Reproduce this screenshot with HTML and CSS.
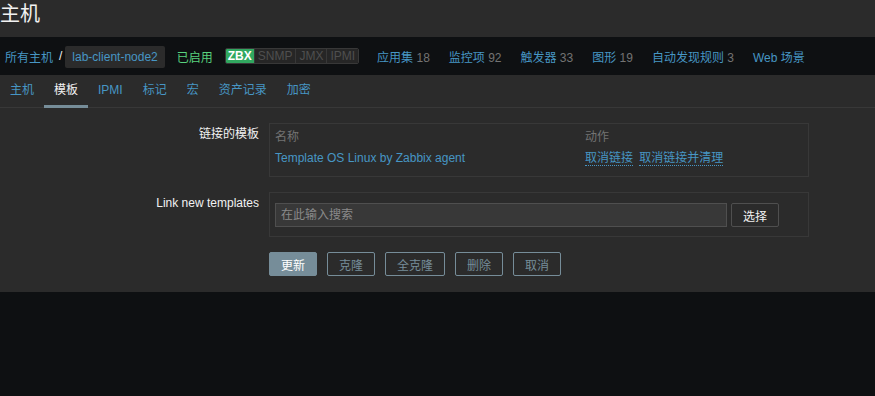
FILE: index.html
```html
<!DOCTYPE html>
<html lang="zh-CN">
<head>
<meta charset="UTF-8" />
<meta name="viewport" content="width=device-width, initial-scale=1" />
<title>主机 - 模板</title>
<link rel="stylesheet" href="styles.css">
</head>
<body>

<!-- TITLE -->
<header class="page-header">
  <h1>主机</h1>
</header>

<!-- HOST NAV -->
<nav class="host-nav">
  <a class="crumb" href="#">所有主机</a>
  <span class="crumb-sep">/</span>
  <a class="crumb-host" href="#">lab-client-node2</a>
  <span class="status-on">已启用</span>
  <div class="avail">
    <span class="avail-on">ZBX</span>
    <span>SNMP</span>
    <span>JMX</span>
    <span>IPMI</span>
  </div>
  <div class="nav-links">
    <a href="#">应用集 <em>18</em></a>
    <a href="#">监控项 <em>92</em></a>
    <a href="#">触发器 <em>33</em></a>
    <a href="#">图形 <em>19</em></a>
    <a href="#">自动发现规则 <em>3</em></a>
    <a href="#">Web 场景</a>
  </div>
</nav>

<!-- FORM -->
<main class="form-wrap">
  <ul class="tabs">
    <li><a href="#">主机</a></li>
    <li class="active"><a href="#">模板</a></li>
    <li><a href="#">IPMI</a></li>
    <li><a href="#">标记</a></li>
    <li><a href="#">宏</a></li>
    <li><a href="#">资产记录</a></li>
    <li><a href="#">加密</a></li>
  </ul>

  <div class="tab-body">
    <div class="form-row">
      <label>链接的模板</label>
      <div class="field-box">
        <table class="linked">
          <tr>
            <th class="col-name">名称</th>
            <th>动作</th>
          </tr>
          <tr>
            <td><a href="#">Template OS Linux by Zabbix agent</a></td>
            <td>
              <a class="dotted" href="#">取消链接</a>
              <a class="dotted" href="#">取消链接并清理</a>
            </td>
          </tr>
        </table>
      </div>
    </div>

    <div class="form-row">
      <label for="tplSearch">Link new templates</label>
      <div class="field-box search-box">
        <input type="text" id="tplSearch" placeholder="在此输入搜索" />
        <button type="button" class="btn-plain">选择</button>
      </div>
    </div>

    <div class="form-actions">
      <button type="button" class="btn-main">更新</button>
      <button type="button" class="btn-alt">克隆</button>
      <button type="button" class="btn-alt">全克隆</button>
      <button type="button" class="btn-alt">删除</button>
      <button type="button" class="btn-alt">取消</button>
    </div>
  </div>
</main>

</body>
</html>
```

FILE: styles.css
```css
body {
  margin: 0;
  font-family: 'Liberation Sans', Arial, 'Noto Sans CJK SC', sans-serif;
  font-size: 12px;
  background: #0e1012;
  color: #f2f2f2;
  min-height: 100vh;
}
a {
  color: #4796c4;
  text-decoration: none;
}
/* TITLE */
.page-header {
  background: #2b2b2b;
  height: 37px;
}
.page-header h1 {
  margin: 0;
  font-size: 20px;
  font-weight: normal;
  line-height: 28px;
  color: #f2f2f2;
}
/* HOST NAV */
.host-nav {
  display: flex;
  align-items: center;
  height: 38px;
  padding-left: 5px;
  background: #0e1012;
}
.crumb-sep {
  margin: 0 3px 0 6px;
  color: #f2f2f2;
}
.crumb-host {
  display: block;
  height: 22px;
  line-height: 22px;
  padding: 0 7px;
  margin-top: 2px;
  background: #2b2b2b;
  border-radius: 2px;
}
.status-on {
  margin-left: 12px;
  color: #59d27e;
}
.avail {
  display: flex;
  margin-left: 12px;
  border: 1px solid #383838;
  border-radius: 2px;
  overflow: hidden;
}
.avail span {
  padding: 0 3px;
  line-height: 14px;
  font-size: 12px;
  color: #4f4f4f;
  background: #262626;
  border-left: 1px solid #383838;
}
.avail .avail-on {
  border-left: none;
  background: #31a860;
  color: #ffffff;
  font-weight: bold;
  padding: 0 2px;
}
.nav-links {
  display: flex;
  gap: 19px;
  margin-left: 18px;
}
.nav-links em {
  font-style: normal;
  color: #737373;
}
/* TABS */
.form-wrap {
  background: #2b2b2b;
}
.tabs {
  display: flex;
  margin: 0;
  padding: 0;
  list-style: none;
  border-bottom: 1px solid #383838;
}
.tabs li {
  margin-bottom: -1px;
}
.tabs a {
  display: block;
  padding: 0 10px;
  line-height: 30px;
  border-bottom: 3px solid transparent;
}
.tabs .active a {
  color: #f2f2f2;
  border-bottom-color: #768d99;
}
/* FORM BODY */
.tab-body {
  padding: 15px 0 16px 0;
}
.form-row {
  display: grid;
  grid-template-columns: 259px 540px;
  column-gap: 10px;
  margin-bottom: 15px;
}
.form-row label {
  text-align: right;
  padding-top: 4px;
  line-height: 15px;
  color: #f2f2f2;
}
.field-box {
  border: 1px solid #383838;
  padding: 5px 5px 4px 5px;
}
.linked {
  width: 100%;
  border-collapse: collapse;
}
.linked th {
  text-align: left;
  font-weight: normal;
  color: #737373;
  line-height: 16px;
  padding: 0;
}
.linked .col-name {
  width: 310px;
}
.linked td {
  line-height: 17px;
  padding: 5px 0;
}
.dotted {
  border-bottom: 1px dotted #4796c4;
  margin-right: 3px;
}
.search-box {
  display: flex;
  gap: 4px;
  padding: 10px 5px 9px 5px;
}
.search-box input {
  width: 452px;
  height: 24px;
  box-sizing: border-box;
  padding: 0 5px;
  border: 1px solid #4f4f4f;
  background: #383838;
  color: #f2f2f2;
  font-family: inherit;
  font-size: 12px;
}
.search-box input::placeholder {
  color: #8a8a8a;
}
button {
  height: 24px;
  padding: 0 11px;
  font-family: inherit;
  font-size: 12px;
  border-radius: 2px;
  cursor: pointer;
}
.btn-plain {
  background: #2b2b2b;
  border: 1px solid #4f4f4f;
  color: #f2f2f2;
}
.form-actions {
  display: flex;
  gap: 10px;
  padding-left: 269px;
}
.btn-main {
  background: #768d99;
  border: 1px solid #768d99;
  color: #ffffff;
}
.btn-alt {
  background: transparent;
  border: 1px solid #768d99;
  color: #768d99;
}
```
